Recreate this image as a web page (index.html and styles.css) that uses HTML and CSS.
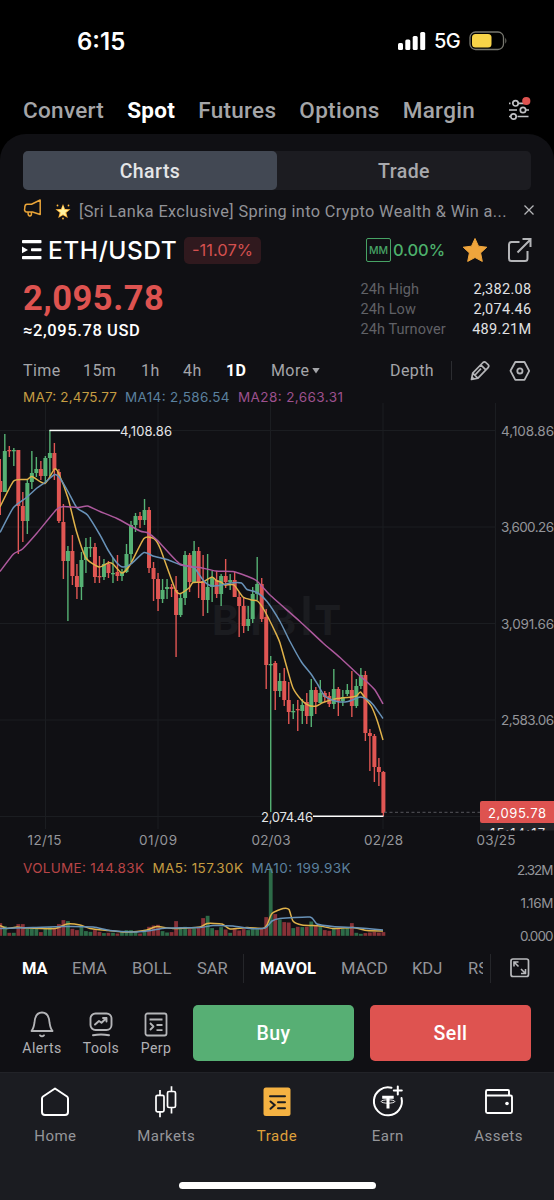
FILE: index.html
```html
<!DOCTYPE html>
<html lang="en">
<head>
<meta charset="utf-8">
<title>ETH/USDT</title>
<link rel="stylesheet" href="styles.css">
</head>
<body>
<header class="status">
  <span class="clock">6:15</span>
  <span class="status-right">
    <svg width="28" height="20" viewBox="0 0 28 20" fill="#fff"><rect y="12" width="5" height="7" rx="1.5"/><rect x="7.3" y="8.6" width="5" height="10.4" rx="1.5"/><rect x="14.7" y="5" width="5" height="14" rx="1.5"/><rect x="22.2" y="1" width="5" height="18" rx="1.5"/></svg>
    <span class="network">5G</span>
    <svg width="39" height="20" viewBox="0 0 39 20"><rect x="1" y="1" width="33.5" height="17.5" rx="5.5" fill="none" stroke="#77776f" stroke-width="1.3"/><rect x="3" y="3" width="19.5" height="13.5" rx="3.5" fill="#f8d448"/><path d="M36.3 6.8q2.2 3 0 6z" fill="#77776f"/></svg>
  </span>
</header>
<nav class="topnav">
  <span>Convert</span><span class="on">Spot</span><span>Futures</span><span>Options</span><span>Margin</span>
  <svg class="sliders" width="28" height="28" viewBox="0 0 28 28" fill="none" stroke="#c0c1c4" stroke-width="1.7"><path d="M4 8.3h1.5M13 8.3h6M4 15h8M20 15h4M4 21.5h1.5M12.5 21.5h11"/><circle cx="10.5" cy="8.3" r="2.7"/><circle cx="18" cy="15" r="2.7"/><circle cx="8.5" cy="21.5" r="2.7"/><circle cx="21.300" cy="6" r="4.100" fill="#de5350" stroke="none"/></svg>
</nav>
<main class="panel">
  <div class="segments"><span class="segment active">Charts</span><span class="segment">Trade</span></div>
  <div class="notice">
    <svg width="20" height="20" viewBox="0 0 20 20" fill="none" stroke="#e9a438" stroke-width="1.5" stroke-linejoin="round"><path d="M2 7.200q0-1.800 2-2H8.500L17.200 1v14.500L9.500 13H3.500Q2 13 1.500 11zM5 13q0 3.800 1.500 4 2.500.2 1.800-3.800"/></svg>
    <svg class="spark" width="16" height="18" viewBox="0 0 16 18"><g fill="#ffb83d"><path d="M8 2l2 5 5.500.3-4.200 3.500 1.500 5.200L8 13.300 3.200 16l1.500-5.200L.5 7.300 6 7z"/><circle cx="2.500" cy="3.500" r=".9"/><circle cx="13.500" cy="3.500" r=".9"/><circle cx="8" cy="16.500" r=".9"/></g><path d="M8 3.500l1.400 4.200 4 .2-3.200 2.600 1 3.800L8 12.200l-3.200 2.100 1-3.800-3.200-2.600 4-.2z" fill="#fff3a2"/></svg>
    <span class="notice-text">[Sri Lanka Exclusive] Spring into Crypto Wealth &amp; Win a...</span>
    <svg class="close" width="12" height="12" viewBox="0 0 12 12" stroke="#b5b6b9" stroke-width="1.3"><path d="M1.500 1.500l9 9M10.500 1.500l-9 9"/></svg>
  </div>
  <div class="pair">
    <svg width="20" height="20" viewBox="0 0 20 20" fill="#fff"><rect y="0" width="19.500" height="3.300" rx=".8"/><rect x="9" y="8.300" width="10.500" height="3" rx=".8"/><rect y="16" width="19.500" height="3.300" rx=".8"/><path d="M0 6.500l6 3.400-6 3.400z"/></svg>
    <span class="symbol">ETH/USDT</span>
    <span class="change">-11.07%</span>
    <span class="mm">MM</span><span class="rate">0.00%</span>
    <svg class="star" width="26" height="26" viewBox="0 0 26 26"><path d="M13 1.500l3.500 7.700 8.300 1-6.200 5.700 1.700 8.500L13 20.500l-7.300 3.900 1.700-8.500-6.200-5.700 8.300-1z" fill="#efa53c" stroke="#efa53c" stroke-linejoin="round"/></svg>
    <svg class="share" width="26" height="26" viewBox="0 0 26 26" fill="none" stroke="#b4b5b8" stroke-width="2"><path d="M12.500 5H4.500Q2 5 2 7.500v14Q2 24 4.500 24h13.500q2.500 0 2.500-2.500V14M10.500 15.500L23 3M15.500 2h8v8"/></svg>
  </div>
  <div class="quote">
    <div><div class="price">2,095.78</div><div class="usd">≈2,095.78 USD</div></div>
    <dl class="stats"><dt>24h High</dt><dd>2,382.08</dd><dt>24h Low</dt><dd>2,074.46</dd><dt>24h Turnover</dt><dd>489.21M</dd></dl>
  </div>
  <div class="frames">
    <span class="f-time">Time</span><span class="f-15">15m</span><span class="f-1">1h</span><span class="f-4">4h</span><span class="f-day on">1D</span><span class="more">More<svg width="8" height="7" viewBox="0 0 8 7"><path d="M.3 1h7.400L4 6.500z" fill="#a4a5a9"/></svg></span><span class="depth">Depth</span>
    <svg class="pencil" width="22" height="22" viewBox="0 0 22 22" fill="none" stroke="#b4b5b8" stroke-width="1.700" stroke-linejoin="round"><path d="M2.500 19.500l1.200-6.300L14 2.500q1.400-1.200 2.800 0l2.300 2.200q1.400 1.400 0 2.900L9 18.200zM11.800 4.800l5 5M3.700 13.200l5 4.800M3 17l2.300 2.300M6 15l6-6.300"/></svg>
    <svg width="22" height="22" viewBox="0 0 22 22" fill="none" stroke="#b4b5b8" stroke-width="1.800" stroke-linejoin="round"><path d="M6.300 2h9.200l4.700 8.800-4.700 9H6.300L1.500 10.800z"/><circle cx="10.900" cy="10.900" r="2.600"/></svg>
  </div>
  <svg id="chart" class="chart" width="554" height="560" viewBox="0 385 554 560"></svg>
  <div class="indicators">
    <div class="indicator-list"><span class="i-ma on">MA</span><span class="i-ema">EMA</span><span class="i-boll">BOLL</span><span class="i-sar">SAR</span><span class="i-mavol on">MAVOL</span><span class="i-macd">MACD</span><span class="i-kdj">KDJ</span><span class="i-rsi">RSI</span></div>
    <svg class="expand" width="20" height="20" viewBox="0 0 20 20" fill="none" stroke="#b9babd" stroke-width="1.700"><rect x="1" y="1" width="17.500" height="17.500" rx="2"/><path d="M4 8.500V4h4.500M4 4l4.500 4.500M11 15.500h4.500V11M15.500 15.500L11 11" stroke-width="1.600"/></svg>
  </div>
  <div class="actions">
    <div class="tool alerts"><svg width="26" height="27" viewBox="0 0 26 27" fill="none" stroke="#b4b5b8" stroke-width="1.800" stroke-linecap="round" stroke-linejoin="round"><path d="M2.500 20q2-2 3-8.500Q6.200 1.500 13 1.500t7.500 10q1 6.500 3 8.500zM11 24.300q2 2 4 0"/></svg><span>Alerts</span></div>
    <div class="tool tools"><svg width="26" height="27" viewBox="0 0 26 27" fill="none" stroke="#b4b5b8" stroke-width="1.900" stroke-linecap="round" stroke-linejoin="round"><rect x="2.500" y="2.500" width="21" height="16.500" rx="5"/><path d="M7 13.500l4-3.500 2.500 1.800L18.500 7M15 7h3.500v3.500M5 24.300q8-1.500 16 0"/></svg><span>Tools</span></div>
    <div class="tool perp"><svg width="26" height="27" viewBox="0 0 26 27" fill="none" stroke="#b4b5b8" stroke-width="1.800" stroke-linejoin="round"><rect x="2.500" y="2.500" width="21" height="22" rx="2"/><path d="M6.500 8.500h13M13.500 14h6M13.500 19.200h6M7 12l3.500 3.500L7 19"/></svg><span>Perp</span></div>
    <button class="buy">Buy</button><button class="sell">Sell</button>
  </div>
</main>
<footer class="tabbar">
  <div class="tabs">
    <div class="tab"><svg width="34" height="34" viewBox="0 0 34 34" fill="none" stroke="#fff" stroke-width="2" stroke-linejoin="round"><path d="M17 3.500L29 11.500Q30 12.200 30 13.500V27q0 3-3 3H7q-3 0-3-3V13.500q0-1.300 1-2z"/></svg><span>Home</span></div>
    <div class="tab"><svg width="34" height="34" viewBox="0 0 34 34" fill="none" stroke="#fff" stroke-width="1.700"><rect x="7" y="10.300" width="8" height="16.500" rx="1.500"/><rect x="18.500" y="6.500" width="8" height="16" rx="1.500"/><path d="M11 5v5.300M11 26.800v5.500M22.500 1.300v5.200M22.500 22.500v6"/></svg><span>Markets</span></div>
    <div class="tab active"><svg width="34" height="34" viewBox="0 0 34 34"><rect x="3.500" y="2.500" width="27" height="28.500" rx="2.500" fill="#f5b242"/><path d="M10 11.200h15M18 17.300h7M18 23.300h7M10.500 16.500l4.200 3.600-4.200 3.700" fill="none" stroke="#1b1c20" stroke-width="2" stroke-linecap="round"/></svg><span>Trade</span></div>
    <div class="tab"><svg width="34" height="34" viewBox="0 0 34 34" fill="none" stroke="#fff" stroke-width="2"><path d="M20.500 2.800A14 14 0 1 0 30.500 13M26.800 1.500v8M22.800 5.500h8" stroke-linecap="round"/><path d="M11.200 12.200h11.500M17 12v11.500" stroke-width="3"/><ellipse cx="17" cy="16.500" rx="6.800" ry="1.700" stroke-width=".9"/></svg><span>Earn</span></div>
    <div class="tab"><svg width="34" height="34" viewBox="0 0 34 34" fill="none" stroke="#fff" stroke-width="1.900" stroke-linejoin="round"><path d="M27 10.500V6q0-1-1-1H5.500Q4 5 4 6.500v20q0 1.500 1.500 1.500H28.500q1.500 0 1.500-1.500V12q0-1.500-1.500-1.500H4"/><circle cx="25" cy="18.500" r="1.800" fill="#fff" stroke="none"/></svg><span>Assets</span></div>
  </div>
  <div class="homebar"></div>
</footer>
<script src="chart.js"></script>
</body>
</html>
```
FILE: styles.css
```css
* { box-sizing: border-box; }
body { margin: 0; width: 554px; height: 1200px; overflow: hidden; background: #000; color: #fff; font-family: Roboto, "Noto Sans", sans-serif; display: flex; flex-direction: column; }
svg { display: block; flex: none; }
span { white-space: nowrap; }
.status { height: 84px; padding: 0 46px 2px 77px; display: flex; align-items: center; justify-content: space-between; font-family: Inter, sans-serif; }
.clock { font-size: 24px; font-weight: 600; letter-spacing: 0; }
.status-right { display: flex; align-items: center; }
.network { font-size: 20px; font-weight: 500; width: 26px; margin: 0 9px 0 8px; letter-spacing: -.6px; }
.topnav { height: 50px; padding: 2px 21px 0 23px; display: flex; align-items: center; gap: 23px; font-size: 22.5px; font-weight: 500; color: #a4a5a8; letter-spacing: .3px; }
.topnav .on { color: #fff; font-weight: 700; }
.sliders { margin: -2px 0 0 auto; }
.panel { height: 938px; background: #101014; border-radius: 26px 26px 0 0; padding-top: 17px; display: flex; flex-direction: column; }
.segments { margin: 0 23px; height: 39px; flex: none; display: flex; background: #1c1c21; border-radius: 5px; }
.segment { flex: 1; display: grid; place-items: center; font-size: 19.5px; font-weight: 500; letter-spacing: .45px; color: #a8a9ad; border-radius: 5px; padding-top: 1px; }
.segment.active { background: #424853; color: #e4e5e7; }
.notice { height: 42px; flex: none; padding: 0 19px 0 23px; display: flex; align-items: center; }
.notice > svg:first-child { margin-top: -4px; }
.spark { margin: 0 8px 0 12px; }
.notice-text { font-size: 16.3px; color: #929398; letter-spacing: .38px; }
.close { margin: -3px 0 0 auto; }
.pair { height: 36px; flex: none; padding: 0 21px 0 22px; display: flex; align-items: center; }
.symbol { font: 500 24.5px Inter, sans-serif; letter-spacing: .55px; margin: 0 6px 0 6px; width: 130px; }
.change { width: 77px; height: 27px; border-radius: 5px; background: #30191e; color: #d4504f; display: grid; place-items: center; font: 400 16.500px Inter, sans-serif; }
.mm { margin-left: 105px; width: 25px; height: 24px; border: 1.500px solid #47a365; border-radius: 2px; color: #47a365; display: grid; place-items: center; font: 500 10.500px Inter, sans-serif; }
.rate { width: 53px; margin-left: 2px; color: #4db16c; font: 500 16.500px Inter, sans-serif; letter-spacing: -.1px; }
.star { margin-left: 16px; }
.share { margin-left: auto; }
.quote { height: 80px; flex: none; padding: 9px 22.500px 0 23px; display: flex; justify-content: space-between; }
.price { font-size: 34.500px; line-height: 42px; font-weight: 700; letter-spacing: .5px; color: #de5350; }
.usd { font-size: 16.500px; line-height: 24px; font-weight: 500; letter-spacing: .6px; }
.stats { margin: 3px 0 0; width: 171px; height: 60px; display: grid; grid-template-columns: 1fr auto; font-size: 14.500px; line-height: 19.700px; letter-spacing: .08px; }
.stats dt { color: #606166; }
.stats dd { margin: 0; text-align: right; color: #e0e1e3; letter-spacing: .3px; }
.frames { height: 37px; flex: none; padding: 8px 23px 0; display: flex; align-items: center; font-size: 16px; color: #a4a5a9; letter-spacing: .4px; }
.f-time { width: 60px; }
.f-15 { width: 58px; }
.f-1 { width: 42px; }
.f-4 { width: 43px; }
.f-day { width: 45px; }
.frames .on, .indicators .on { color: #fff; font-weight: 700; }
.more { display: flex; align-items: center; gap: 3px; }
.depth { margin-left: auto; padding-right: 17px; border-right: 1px solid #2c2d31; }
.pencil { margin: 0 18px 0 17px; }
.indicators { height: 46px; flex: none; padding-left: 22px; display: flex; align-items: center; font-size: 16.500px; color: #94959a; }
.indicator-list { width: 469px; height: 29px; overflow: hidden; border-right: 1px solid #25262a; display: flex; align-items: center; flex: none; }
.indicator-list span { flex: none; }
.i-ma { width: 50px; }
.i-ema { width: 60px; }
.i-boll { width: 65px; }
.i-sar { width: 47px; line-height: 29px; border-right: 1px solid #25262a; }
.i-mavol { width: 97px; padding-left: 16px; }
.i-macd { width: 71px; }
.i-kdj { width: 56px; }
.i-rsi { width: 15px; overflow: hidden; }
.expand { margin-left: 19px; }
.actions { height: 81px; flex: none; padding: 14px 23px 11px 22px; display: flex; }
.tool { padding-top: 6px; display: flex; flex-direction: column; align-items: center; font-size: 14px; letter-spacing: .4px; color: #b0b1b4; flex: none; line-height: 20px; }
.alerts { width: 40px; }
.tools { width: 40px; margin-left: 19px; }
.perp { width: 40px; margin-left: 15px; }
button { width: 161px; height: 56px; border: 0; border-radius: 5px; padding: 0; font: 500 19.500px Roboto, sans-serif; letter-spacing: .4px; color: #fff; }
.buy { background: #57af74; margin-left: 17px; }
.sell { background: #de5350; margin-left: auto; }
.tabbar { height: 128px; background: #1b1c21; border-top: 1px solid #222328; }
.tabs { display: flex; padding-top: 12px; height: 109px; }
.tab { flex: 1; display: flex; flex-direction: column; align-items: center; gap: 7px; font-size: 15px; line-height: 20px; color: #95969a; letter-spacing: .5px; }
.tab.active { color: #dfa03b; }
.homebar { width: 197px; height: 7px; border-radius: 4px; background: #fff; margin: 0 auto; }
.legend { font: 13.500px Inter, sans-serif; }
.axis { font: 13.500px Inter, sans-serif; fill: #94959a; }
.callout { font: 13px Inter, sans-serif; fill: #e4e5e7; }
.watermark { font: 700 41px Inter, sans-serif; fill: #1b1c20; }
```
FILE: chart.js
```js
// Each candle: colour, body top, body bottom, high, low, volume height.
const candles = `r481,492,459,515,12.7 g451,492,434,492,9.7 r450,451,446,457,3 g450,451,448,466,3 r450,506,450,554,11.7 r506,521,492,542,11.7 g483,521,479,534,7 g473,482,451,489,7 g469,473,457,477,7 r469,476,461,480,3.7 g458,476,456,483,7.7 g453,458,430,476,8.7 r453,470,443,480,7.3 r472,521,469,523,11.7 r522,561,504,579,15.7 g551,561,546,621,14.7 r551,576,535,585,7 r576,587,564,599,5.7 g560,587,552,600,9.7 g547,560,538,573,4.7 g547,548,537,557,4 r547,577,543,583,5.7 r576,577,556,583,4 g564,577,559,580,2.7 r564,573,561,578,3 g573,574,558,583,3 r572,576,555,581,2.3 g573,576,569,581,3.7 g554,572,544,573,5.7 g525,554,521,562,5.7 g516,525,513,532,4 r516,520,512,528,2.3 g510,520,499,525,5.7 r510,568,507,573,9 r568,579,562,601,10.3 r579,599,573,611,11 g590,599,579,603,4.7 g587,589,579,599,3.3 r587,589,584,597,3.7 r590,615,576,657,14.7 g598,615,593,617,8.7 g555,598,551,605,9 r555,582,553,592,6.7 g551,582,541,583,7.3 r551,582,547,598,9 r581,600,555,616,17.7 g587,600,554,613,20 g577,587,571,602,7.7 r580,594,571,598,5.7 g576,594,574,606,8.7 r576,582,559,588,6.3 g580,582,574,590,3 r580,597,572,597,6.7 r597,606,592,637,5.3 r606,626,598,633,6.7 g619,626,606,631,5.7 g594,619,587,623,6.7 g584,594,557,600,6.7 r584,619,578,622,6.7 r617,665,609,689,18.7 g664,665,656,812,67.3 r663,691,661,710,21.7 g681,691,673,697,16.3 r681,700,668,706,13.7 r700,712,682,724,13.3 g711,712,704,719,7.7 r709,710,700,731,9 g705,711,699,724,8.7 r702,716,693,724,9 g690,716,679,727,14.3 r690,702,687,714,10.7 g693,703,680,703,9.7 r693,697,691,702,5.7 r696,704,692,707,5 g689,704,669,709,7.3 r689,701,687,716,7.7 g697,701,690,706,7.3 g690,694,684,696,8.3 r690,706,671,717,12.7 g686,706,679,708,3 g675,686,668,689,2 r675,733,671,741,2.7 r733,736,729,771,3.3 r736,767,734,782,4 r767,772,758,786,3.3 r772,813,771,816,3.7`.split(' ');

const lines = [
  ['#e0b24a', '0,507 13.7,481 27,479.5 32,476.5 45,483.5 54.500,469 58.500,473 68,498 76.500,531.500 86,558 99,567 108,563 113,564 122,573 130,565 144,538.500 154,538.500 160,548 175.500,590 180.500,593.500 189,588 193,582.500 203,582 212,577 217,581 221,582 225,585 234,585 243,597 252,600 257.500,601 265,611.500 275,631.500 280,643 287,668 293,688 301.500,700 309,705.500 316.500,706 323,702.500 337,698.500 351.500,697 356.500,696 360.500,692 366.500,700 371.500,706.500 377.500,721.500 383,740'],
  ['#6892b8', '0,532.500 13.500,507.500 26.500,497.500 37,488 45,482.500 54.500,474.500 59.500,477.500 68,491.500 77,508 87.500,515 100,535 108,550 117,563 123,567 131,564 144,552.500 153,556 167,559.500 181,565 190,566.500 195,568.500 203,580 210,585.500 220,585.500 230,583 241.500,583 247,589.500 257,592.500 267,601.500 280,621.500 290,641.500 301.500,662 311,674 318,685 325,696.500 337,701.500 348,701.500 360,697 366.500,699 373,704.500 383,718.500'],
  ['#ad599d', '0,571.500 13.500,554 22.500,549 37,533 56.500,509.500 63.500,506.500 78.500,507.500 87.500,506 100,511.500 117,518.500 140,531 147,532.500 157,540 180,564 200,567.500 216,571 233,571.500 246.500,576 257,581 270,595 300,621.500 323,643 340,657.500 357,673.500 366.500,681.500 375,690 383,704'],
  ['#e0b24a', '0,925.500 7,928.500 17,927 27,928 55,928.500 67,924 80,925 90,928.500 107,930.500 123,932 137,931.500 147,930 157,926.500 173,928.500 200,927 207,923.500 222,924 230,929 247,927.500 263,928.500 267,925 272,913.500 283,908.500 289,909.500 293,921 302,925 320,926 333,928.500 353,927.500 367,930.500 383,931'],
  ['#6892b8', '0,928.500 33,927.500 63,926.500 93,927 110,930.500 133,932 147,931 167,928 200,927.500 213,925.500 233,926 250,928.500 265,928 272,921 280,918.500 310,917 317,924 333,926.500 353,927.500 367,928.500 383,930']
];

const rect = (x, y, w, h, fill) => `<rect x="${x}" y="${y}" width="${w}" height="${h}" fill="${fill}"/>`;
const label = (x, y, w, text, cls, fill) => `<text x="${x}" y="${y}" textLength="${w}" class="${cls}"${fill ? ` style="fill:${fill}"` : ''}>${text}</text>`;

// Cardinal spline through the given points.
function curve(source) {
  const p = source.split(' ').map(s => s.split(',').map(Number));
  let d = `M${p[0]}`;
  for (let i = 0; i < p.length - 1; i++) {
    const a = p[i - 1] || p[i], b = p[i], c = p[i + 1], e = p[i + 2] || c;
    const k = 0.1;
    d += `C${b[0] + (c[0] - a[0]) * k},${b[1] + (c[1] - a[1]) * k} ${c[0] - (e[0] - b[0]) * k},${c[1] - (e[1] - b[1]) * k} ${c}`;
  }
  return d;
}

let out = '';
for (const x of [45, 157.500, 270, 382.500, 495]) out += rect(x, 403, 1, 426, '#1b1d21');
for (const y of [430, 526.500, 623, 719.500, 816]) out += rect(0, y, 496, 1, '#1b1d21');
out += '<text class="watermark" y="635"><tspan x="212">B</tspan><tspan x="241">Y</tspan><tspan x="269">B</tspan><tspan x="314">T</tspan></text>' + rect(303.500, 596, 6, 39, '#1b1c20');

candles.forEach((row, i) => {
  const up = row[0] === 'g';
  const [top, bottom, high, low, volume] = row.slice(1).split(',').map(Number);
  const x = 0.3 + i * 4.507;
  const fill = up ? '#56b174' : '#e05653';
  out += rect(x - 0.7, high, 1.4, low - high, fill);
  out += rect(x - 2, top, 4, Math.max(bottom - top, 1.3), fill);
  out += rect(x - 1.9, 935.8 - volume, 3.8, volume, up ? '#2d6b48' : '#873137');
});
for (const [stroke, points] of lines) out += `<path d="${curve(points)}" fill="none" stroke="${stroke}" stroke-width="1.5"/>`;

out += rect(49.500, 429.700, 70.500, 1.5, '#fff') + rect(313, 815.500, 70.500, 1.5, '#fff');
out += label(120, 435.500, 52, '4,108.86', 'callout') + label(261, 821.500, 52, '2,074.46', 'callout');
out += '<path d="M384 812.300H480" stroke="#55565b" stroke-dasharray="3 2.5"/>';
[['4,108.86', 435.500], ['3,600.26', 532], ['3,091.66', 628.500], ['2,583.06', 725]].forEach(([t, y]) => out += label(501, y, 53, t, 'axis'));
['12/15', '01/09', '02/03', '02/28', '03/25'].forEach((t, i) => out += label([27.500, 139, 251.500, 364, 476.500][i], 844.500, [34, 38, 39, 39, 39][i], t, 'axis'));
out += '<svg x="480" y="800" width="74" height="30.500">' + rect(0, 22, 74, 9, '#222327') + label(10, 38, 55, '15:14:17', 'callout') + '</svg>';
out += '<rect x="480" y="801" width="78" height="22" rx="2" fill="#de5350"/>' + label(488, 817.500, 58, '2,095.78', 'callout', '#fff');
out += label(23, 402, 94, 'MA7: 2,475.77', 'legend', '#c59d42') + label(125, 402, 104.500, 'MA14: 2,586.54', 'legend', '#5b819f') + label(238, 402, 105, 'MA28: 2,663.31', 'legend', '#9d508e');
out += label(23, 873, 121, 'VOLUME: 144.83K', 'legend', '#b84547') + label(152.500, 873, 90.500, 'MA5: 157.30K', 'legend', '#c59d42') + label(251.500, 873, 99, 'MA10: 199.93K', 'legend', '#5b819f');
out += label(517, 875, 36.500, '2.32M', 'axis') + label(520.500, 908, 33, '1.16M', 'axis') + label(520, 941, 33.500, '0.000', 'axis');
document.getElementById('chart').innerHTML = out;
```
